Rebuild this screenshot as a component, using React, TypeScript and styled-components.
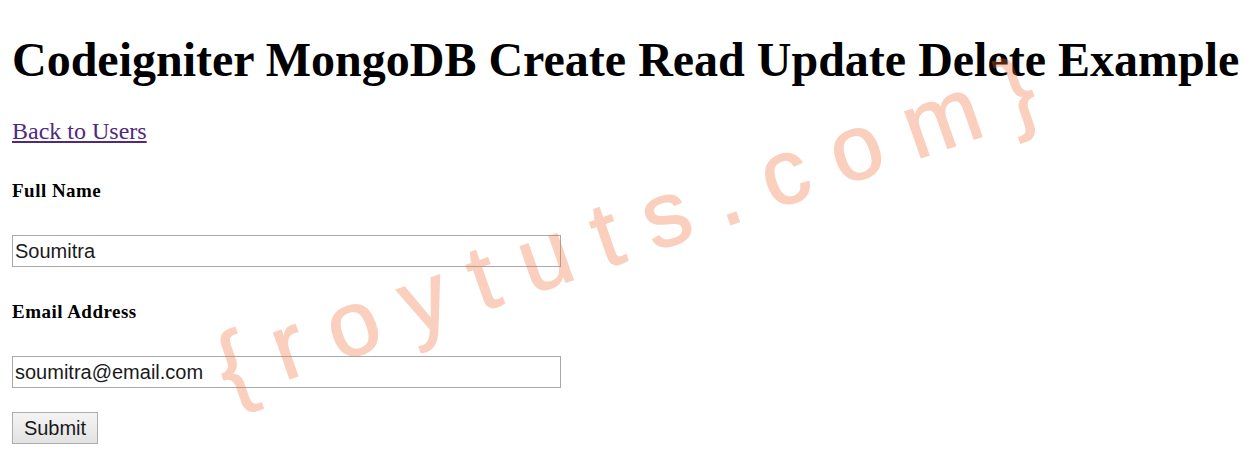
import React from 'react'
import styled, { createGlobalStyle } from 'styled-components'

const GlobalStyle = createGlobalStyle`
    html, body {
        margin: 0;
        padding: 0;
        background: #fff;
        overflow: hidden;
    }
    body {
        font-family: "Liberation Serif", "Times New Roman", serif;
        color: #000;
    }
`

const Page = styled.div`
    position: relative;
    height: 451px;
    padding: 32px 12px 0;
    box-sizing: border-box;
    overflow: hidden;
`

const Title = styled.h1`
    margin: 0 0 31px;
    font-size: 48px;
    line-height: 55px;
    font-weight: bold;
    white-space: nowrap;
`

const BackLink = styled.a`
    display: block;
    width: max-content;
    font-size: 24px;
    line-height: 27px;
    color: #4f2a7d;
    text-decoration: underline;
`

const Form = styled.form`
    display: flex;
    flex-direction: column;
    align-items: flex-start;
    margin-top: 34px;
`

const Field = styled.div`
    display: flex;
    flex-direction: column;
    align-items: flex-start;
    margin-bottom: 24px;

    & + & {
        margin-top: 9px;
    }
`

const Label = styled.label`
    font-size: 19px;
    line-height: 23px;
    letter-spacing: 0.48px;
    font-weight: bold;
    margin-bottom: 33px;
`

const TextInput = styled.input`
    box-sizing: border-box;
    width: 549px;
    height: 32px;
    padding: 1px 2px;
    border: 1px solid #a9a9a9;
    border-radius: 0;
    outline: none;
    background: transparent;
    font-family: "Liberation Sans", Arial, sans-serif;
    font-size: 20px;
    color: #1a1a1a;
`

const SubmitButton = styled.button`
    box-sizing: border-box;
    width: 86px;
    height: 32px;
    padding: 0;
    border: 1px solid #adadad;
    border-radius: 0;
    background: linear-gradient(#f4f4f4, #e2e2e2);
    font-family: "Liberation Sans", Arial, sans-serif;
    font-size: 20px;
    color: #1a1a1a;
`

const Watermark = styled.div`
    position: absolute;
    left: 194px;
    top: 173px;
    font-family: "Liberation Sans", Arial, sans-serif;
    font-size: 92px;
    line-height: 100px;
    letter-spacing: 27px;
    white-space: nowrap;
    color: #f0703a;
    -webkit-text-stroke: 1.5px #f0703a;
    opacity: 0.33;
    transform: rotate(-19.3deg);
    transform-origin: center;
    pointer-events: none;
`

const App: React.FC = () => {
    return (<>
        <GlobalStyle />
        <Page>
            <Title>Codeigniter MongoDB Create Read Update Delete Example</Title>
            <BackLink href="#">Back to Users</BackLink>
            <Form onSubmit={(e) => e.preventDefault()}>
                <Field>
                    <Label htmlFor="name">Full Name</Label>
                    <TextInput id="name" type="text" defaultValue="Soumitra" />
                </Field>
                <Field>
                    <Label htmlFor="email">Email Address</Label>
                    <TextInput id="email" type="text" defaultValue="soumitra@email.com" />
                </Field>
                <SubmitButton type="submit">Submit</SubmitButton>
            </Form>
            <Watermark>{'{roytuts.com}'}</Watermark>
        </Page>
    </>
    )
}

export default App
